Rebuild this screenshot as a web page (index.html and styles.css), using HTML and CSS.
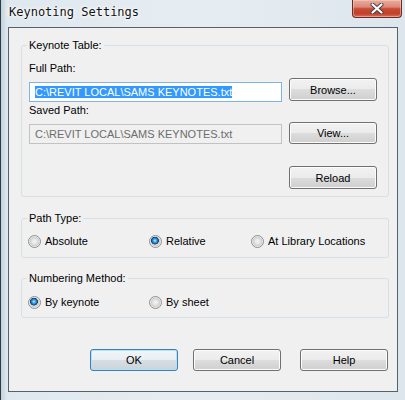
FILE: index.html
```html
<!DOCTYPE html>
<html>
<head>
<meta charset="utf-8">
<link rel="stylesheet" href="styles.css">
</head>
<body>
<div class="window">
  <div class="titlebar">
    <span class="title">Keynoting Settings</span>
    <div class="close">
      <svg width="14" height="11" viewBox="0 0 14 11">
        <path d="M2.5 1.5 L11.5 9.5 M11.5 1.5 L2.5 9.5" stroke="#3b3f4a" stroke-width="4" stroke-linecap="round"/>
        <path d="M2.5 1.5 L11.5 9.5 M11.5 1.5 L2.5 9.5" stroke="#ffffff" stroke-width="2.2" stroke-linecap="round"/>
      </svg>
    </div>
  </div>
  <div class="client">
    <fieldset class="group g1">
      <legend>Keynote Table:</legend>
      <div class="lbl">Full Path:</div>
      <div class="row r1">
        <div class="textbox focus"><span class="sel">C:\REVIT LOCAL\SAMS KEYNOTES.txt</span></div>
        <button class="btn">Browse...</button>
      </div>
      <div class="lbl">Saved Path:</div>
      <div class="row r2">
        <div class="textbox dis">C:\REVIT LOCAL\SAMS KEYNOTES.txt</div>
        <button class="btn">View...</button>
      </div>
      <div class="row r3">
        <button class="btn">Reload</button>
      </div>
    </fieldset>
    <fieldset class="group g2">
      <legend>Path Type:</legend>
      <div class="radios">
        <div class="opt"><span class="radio"></span>Absolute</div>
        <div class="opt"><span class="radio on"></span>Relative</div>
        <div class="opt"><span class="radio"></span>At Library Locations</div>
      </div>
    </fieldset>
    <fieldset class="group g3">
      <legend>Numbering Method:</legend>
      <div class="radios">
        <div class="opt"><span class="radio on"></span>By keynote</div>
        <div class="opt"><span class="radio"></span>By sheet</div>
      </div>
    </fieldset>
    <div class="actions">
      <button class="btn def">OK</button>
      <button class="btn cancel">Cancel</button>
      <button class="btn help">Help</button>
    </div>
  </div>
</div>
</body>
</html>
```
FILE: styles.css
```css
* { box-sizing: border-box; }
html, body { margin: 0; padding: 0; }
body {
  width: 405px;
  height: 400px;
  overflow: hidden;
  background: #cfd9e1;
  font-family: "Liberation Sans", Arial, sans-serif;
  font-size: 11px;
  color: #000;
}
.window {
  width: 405px;
  height: 400px;
  display: flex;
  flex-direction: column;
  border-left: 1px solid #2e3a44;
  background: linear-gradient(90deg, #c3d1dc 0, #dfe8ef 6px, #e6edf2 50%, #dde6ed 100%);
}
.titlebar {
  height: 27px;
  flex: none;
  display: flex;
  justify-content: space-between;
  align-items: flex-start;
  padding-left: 8px;
  padding-right: 3px;
}
.title {
  font-family: "DejaVu Sans Mono", "Liberation Mono", monospace;
  font-size: 12px;
  line-height: 14px;
  margin-top: 5px;
  color: #101010;
  text-shadow: 0 0 5px #fff, 0 0 3px #fff, 0 0 1px #fff;
}
.close {
  width: 50px;
  height: 18px;
  border: 1px solid #6a2c24;
  border-top: none;
  border-radius: 0 0 4px 4px;
  background: linear-gradient(180deg, #e9ab9e 0, #dc8b7a 40%, #c84a34 52%, #c3402b 80%, #d9715a 100%);
  box-shadow: inset 0 0 0 1px rgba(255, 220, 210, 0.45);
  display: flex;
  align-items: center;
  justify-content: center;
}
.close svg { display: block; }
.client {
  margin-left: 7px;
  width: 390px;
  height: 365px;
  flex: none;
  border: 1px solid #56626b;
  background: #f0f0f0;
  padding: 0 0 0 12px;
}
.group {
  width: 368px;
  margin: 0;
  border: 1px solid #d5dfe5;
  border-radius: 3px;
  padding: 8px 7px 7px 7px;
  min-inline-size: auto;
}
.group legend {
  padding: 0 2px;
  margin-left: -2px;
  line-height: 14px;
}
.g1 { margin-top: 10px; }
.g2 { margin-top: 14px; padding-bottom: 8px; }
.g3 { margin-top: 13px; padding-top: 9px; padding-bottom: 7px; }
.lbl { line-height: 16px; }
.row {
  display: flex;
  gap: 7px;
  align-items: flex-start;
}
.r1 { margin-top: 2px; }
.r1 .textbox { margin-top: 4px; }
.r1 .btn { height: 23px; }
.r2 { margin-top: 4px; }
.r2 .textbox { margin-top: 2px; }
.r2 .btn { height: 22px; }
.r3 { margin-top: 22px; padding-left: 260px; }
.r3 .btn { height: 23px; }
.textbox {
  width: 253px;
  height: 20px;
  border: 1px solid #abadb3;
  background: #fff;
  padding: 0 0 0 5px;
  line-height: 18px;
  white-space: nowrap;
  overflow: hidden;
}
.textbox.focus { border-color: #7eb4ea; }
.sel { background: #3399ff; color: #fff; }
.textbox.dis {
  background: #f0f0f0;
  border-color: #c2c2c2;
  color: #6d6d6d;
}
.btn {
  width: 88px;
  height: 22px;
  border: 1px solid #707070;
  border-radius: 3px;
  background: linear-gradient(180deg, #f2f2f2 0, #ebebeb 50%, #dddddd 50%, #cfcfcf 100%);
  box-shadow: inset 0 0 0 1px #fcfcfc;
  font: inherit;
  color: #000;
  padding: 0;
  line-height: 18px;
}
.btn.def {
  border-color: #3c7fb1;
  box-shadow: inset 0 0 0 1px #b4e3f8;
  background: linear-gradient(180deg, #f0f5f8 0, #e8eef2 50%, #d8dfe4 50%, #cbd3d8 100%);
}
.radios {
  display: grid;
  grid-template-columns: 121px 102px auto;
  margin-left: -1px;
}
.opt {
  display: flex;
  align-items: center;
  gap: 4px;
  line-height: 16px;
}
.radio {
  width: 13px;
  height: 13px;
  flex: none;
  border-radius: 50%;
  border: 1px solid #8e8f8f;
  background: radial-gradient(circle at 50% 50%, #f4f4f4 0, #e9e9e9 2px, #cfcfcf 4.5px, #f8f8f8 5.5px);
}
.radio.on {
  background:
    radial-gradient(circle at 45% 42%, #c4f0ff 0, #4cb2ee 1.4px, #1a6cb6 2.8px, #0f3e70 3.6px, rgba(15, 62, 112, 0) 4.2px),
    radial-gradient(circle at 50% 50%, #f4f4f4 0, #e9e9e9 2px, #cfcfcf 4.5px, #f8f8f8 5.5px);
}
.actions {
  display: flex;
  margin-top: 31px;
  padding-left: 69px;
}
.actions .btn { height: 22px; }
.actions .cancel { margin-left: 15px; }
.actions .help { margin-left: 19px; }
```
